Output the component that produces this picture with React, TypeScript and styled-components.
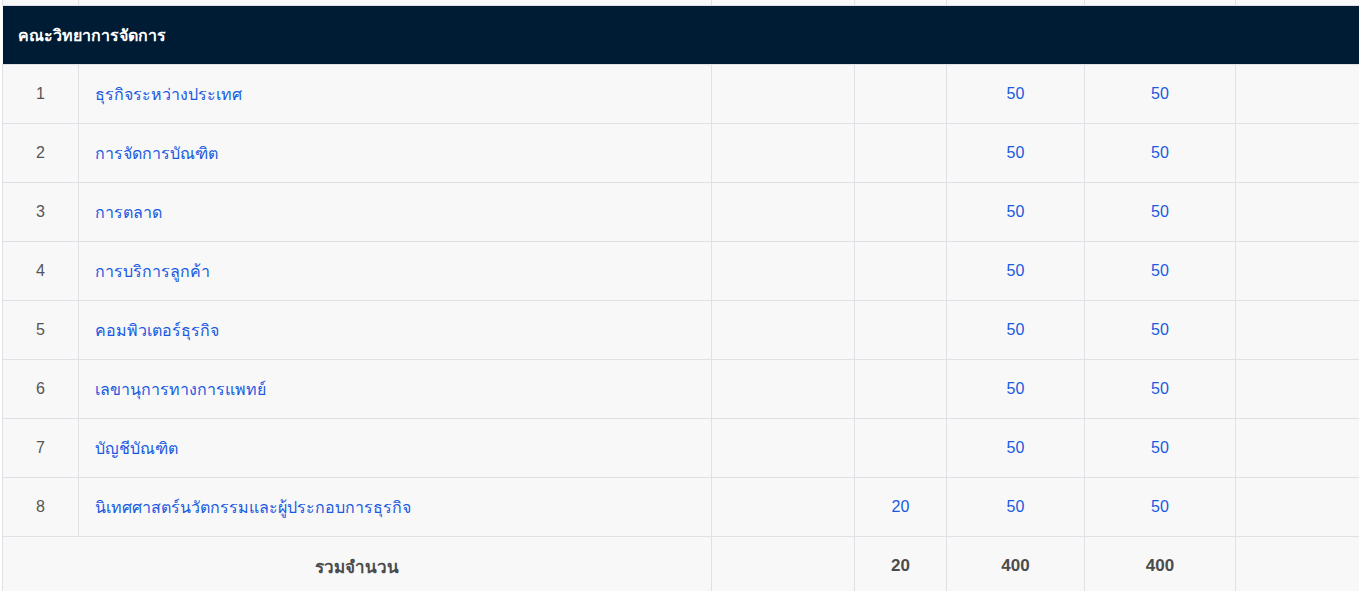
import React from "react";
import styled, { createGlobalStyle } from "styled-components";

const Global = createGlobalStyle`
  html, body {
    margin: 0;
    padding: 0;
    background: #ffffff;
    overflow: hidden;
    font-family: "Liberation Sans", Tahoma, "Noto Sans", sans-serif;
  }
`;

const Page = styled.div`
  padding-left: 2px;
  width: 1600px;
`;

const Table = styled.table`
  border-collapse: collapse;
  table-layout: fixed;
  width: 1500px;
  background: #f8f8f8;
  font-size: 16px;
`;

const Cell = styled.td<{ $align?: "left" | "center"; $tone?: "link" | "muted" | "total" }>`
  border: 1px solid #dee2e6;
  height: 59px;
  padding: 0 16px;
  box-sizing: border-box;
  text-align: ${(p) => p.$align ?? "center"};
  vertical-align: middle;
  color: ${(p) =>
    p.$tone === "link" ? "#1a5ae0" : p.$tone === "total" ? "#4b4b4b" : "#555555"};
  font-weight: ${(p) => (p.$tone === "total" ? 700 : 400)};
  font-size: ${(p) => (p.$tone === "total" ? "17px" : "16px")};
`;

const TailCell = styled.td`
  border: 1px solid #dee2e6;
  border-top: none;
  height: 5px;
  padding: 0;
`;

const HeaderCell = styled.td`
  background: #001b34;
  color: #ffffff;
  font-weight: 700;
  font-size: 16px;
  height: 58px;
  padding: 0 15px;
  text-align: left;
  vertical-align: middle;
  border: 1px solid #dee2e6;
  border-left: none;
`;

const widths = [76, 633, 143, 92, 138, 151, 267];

const rows: { no: number; name: string; c3?: number; c4: number; c5: number }[] = [
  { no: 1, name: "ธุรกิจระหว่างประเทศ", c4: 50, c5: 50 },
  { no: 2, name: "การจัดการบัณฑิต", c4: 50, c5: 50 },
  { no: 3, name: "การตลาด", c4: 50, c5: 50 },
  { no: 4, name: "การบริการลูกค้า", c4: 50, c5: 50 },
  { no: 5, name: "คอมพิวเตอร์ธุรกิจ", c4: 50, c5: 50 },
  { no: 6, name: "เลขานุการทางการแพทย์", c4: 50, c5: 50 },
  { no: 7, name: "บัญชีบัณฑิต", c4: 50, c5: 50 },
  { no: 8, name: "นิเทศศาสตร์นวัตกรรมและผู้ประกอบการธุรกิจ", c3: 20, c4: 50, c5: 50 },
];

export default function App() {
  return (
    <>
      <Global />
      <Page>
        <Table>
          <colgroup>
            {widths.map((w, i) => (
              <col key={i} style={{ width: w }} />
            ))}
          </colgroup>
          <tbody>
            <tr>
              {widths.map((_, i) => (
                <TailCell key={i} />
              ))}
            </tr>
            <tr>
              <HeaderCell colSpan={7}>คณะวิทยาการจัดการ</HeaderCell>
            </tr>
            {rows.map((r) => (
              <tr key={r.no}>
                <Cell $tone="muted">{r.no}</Cell>
                <Cell $align="left" $tone="link">{r.name}</Cell>
                <Cell />
                <Cell $tone="link">{r.c3 ?? ""}</Cell>
                <Cell $tone="link">{r.c4}</Cell>
                <Cell $tone="link">{r.c5}</Cell>
                <Cell />
              </tr>
            ))}
            <tr>
              <Cell colSpan={2} $tone="total">รวมจำนวน</Cell>
              <Cell />
              <Cell $tone="total">20</Cell>
              <Cell $tone="total">400</Cell>
              <Cell $tone="total">400</Cell>
              <Cell />
            </tr>
          </tbody>
        </Table>
      </Page>
    </>
  );
}
